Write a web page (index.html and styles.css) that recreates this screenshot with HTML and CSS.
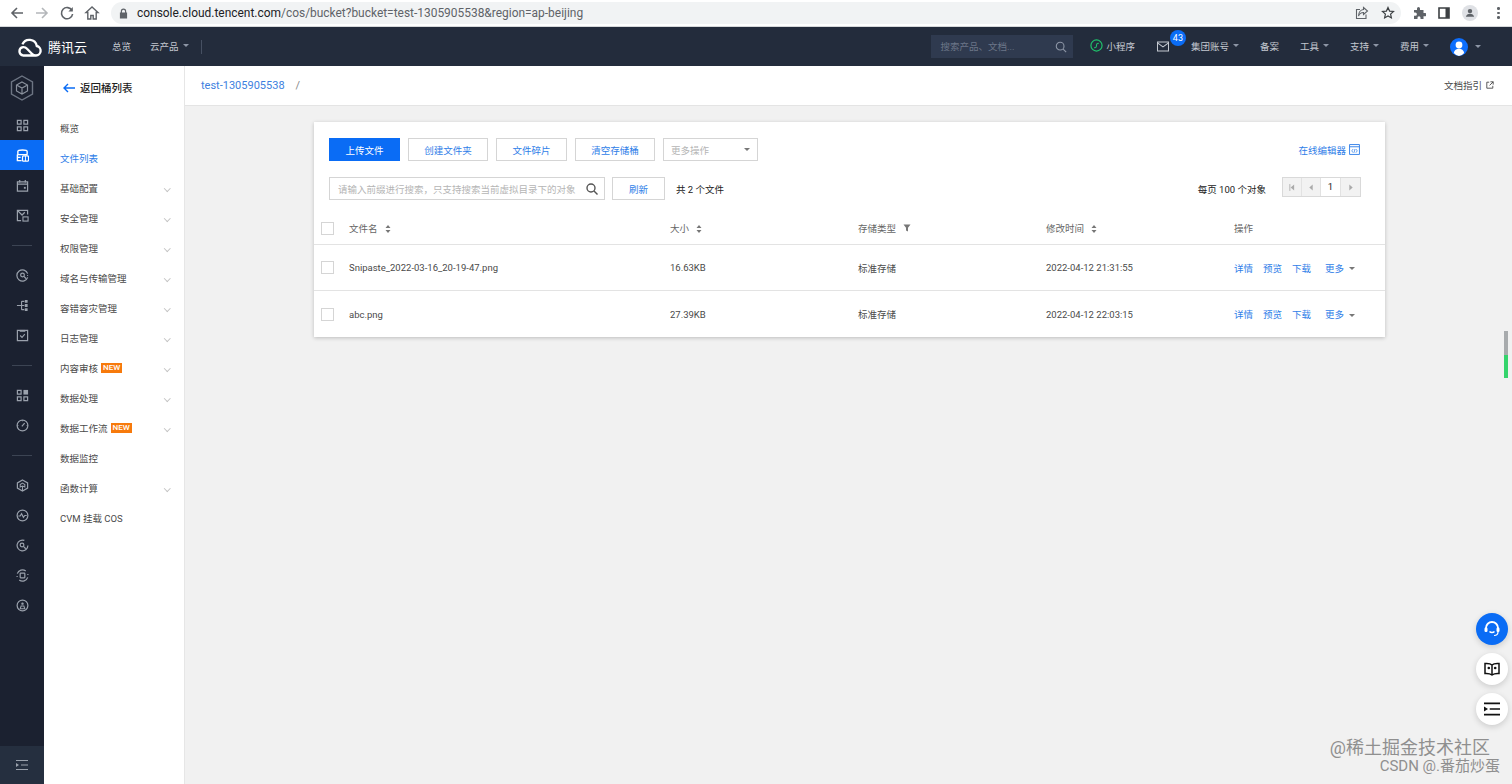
FILE: index.html
```html
<!DOCTYPE html>
<html lang="en">
<head>
    <meta charset="UTF-8">
    <title>对象存储 - 文件列表</title>
    <link rel="stylesheet" href="styles.css">
</head>
<body>
    <!-- browser toolbar -->
    <div class="chrome">
        <div class="chrome-nav">
            <svg class="chrome-icon" viewBox="0 0 16 16"><path d="M14 8H3M8 3L3 8l5 5" fill="none" stroke="#5f6368" stroke-width="1.6"/></svg>
            <svg class="chrome-icon" viewBox="0 0 16 16"><path d="M2 8h11M8 3l5 5-5 5" fill="none" stroke="#b4b7ba" stroke-width="1.6"/></svg>
            <svg class="chrome-icon" viewBox="0 0 16 16"><path d="M13 5.5A5.6 5.6 0 1 0 13.6 9" fill="none" stroke="#5f6368" stroke-width="1.6"/><path d="M13.8 2v4.4H9.4z" fill="#5f6368"/></svg>
            <svg class="chrome-icon" viewBox="0 0 16 16"><path d="M8 2L2 7.5h1.8V14h3v-3.5h2.4V14h3V7.5H14z" fill="none" stroke="#5f6368" stroke-width="1.4"/></svg>
        </div>
        <div class="url-pill">
            <svg class="url-lock" viewBox="0 0 10 12"><path d="M2 5V3.5a3 3 0 0 1 6 0V5h1v6.500H1V5zm1.300 0h3.400V3.500a1.700 1.700 0 0 0-3.400 0z" fill="#5f6368"/></svg>
            <span class="url-text"><b>console.cloud.tencent.com</b>/cos/bucket?bucket=test-1305905538&amp;region=ap-beijing</span>
            <svg class="url-act first" viewBox="0 0 14 14"><path d="M11 8.500V12.500H1.500V3.500H5M8.500 1.500L12.500 5 8.500 8.500V6.500C6 6.500 4.500 7.500 3.500 10 3.500 6.500 5.500 3.700 8.500 3.500z" fill="none" stroke="#5f6368" stroke-width="1.100"/></svg>
            <svg class="url-act" viewBox="0 0 14 14"><path d="M7 1.500l1.600 3.600 3.900.4-2.900 2.600.8 3.800L7 10l-3.400 1.900.8-3.800L1.500 5.500l3.900-.4z" fill="none" stroke="#3c4043" stroke-width="1.200"/></svg>
        </div>
        <div class="chrome-right">
            <svg class="ext-icon" viewBox="0 0 14 14"><path d="M5 2.500a1.500 1.500 0 0 1 3 0V4h3.500v3H13a1.600 1.600 0 0 1 0 3.200h-1.500V13H8.500v-1.300a1.500 1.500 0 0 0-3 0V13H2V9.800h1.300a1.600 1.600 0 0 0 0-3.200H2V4h3z" fill="#5f6368"/></svg>
            <svg class="ext-icon" viewBox="0 0 14 14"><path d="M2 2h10v10H2z" fill="none" stroke="#3c4043" stroke-width="1.600"/><path d="M8.500 2H12v10H8.500z" fill="#3c4043"/></svg>
            <span class="profile"><svg viewBox="0 0 14 14"><circle cx="7" cy="4.800" r="2.600" fill="#5f6368"/><path d="M2.200 11.500c.5-2.400 2.400-3.500 4.800-3.500s4.300 1.100 4.800 3.500z" fill="#5f6368"/></svg></span>
            <span class="kebab"><i></i><i></i><i></i></span>
        </div>
    </div>

    <!-- console header -->
    <header class="topnav">
        <svg class="logo" viewBox="0 0 28 20"><path d="M8 18.500h13a4.800 4.800 0 0 0 .8-9.500A7.600 7.600 0 0 0 7.400 7.400M21 18.500c-2 0-3.200-.8-4.600-2.200L12 11.800A4.900 4.900 0 0 0 8 10.200a4.200 4.200 0 0 0 0 8.300" fill="none" stroke="#fff" stroke-width="2.300"/></svg>
        <span class="brand">腾讯云</span>
        <a class="nav-link overview">总览</a>
        <a class="nav-link products">云产品<i class="caret"></i></a>
        <span class="nav-sep"></span>
        <div class="nav-right">
            <div class="nav-search">
                <span>搜索产品、文档...</span>
                <svg viewBox="0 0 14 14"><circle cx="6" cy="6" r="4.500" fill="none" stroke="#8d96a6" stroke-width="1.300"/><path d="M9.500 9.500L13 13" stroke="#8d96a6" stroke-width="1.300"/></svg>
            </div>
            <a class="nav-link mini">
                <svg viewBox="0 0 14 14"><circle cx="7" cy="7" r="6" fill="none" stroke="#1fc16b" stroke-width="1.300"/><path d="M4.500 9.200c1.500.6 2.500-.3 2.500-2.200s1-2.800 2.500-2.200" fill="none" stroke="#1fc16b" stroke-width="1.200"/></svg>
                小程序
            </a>
            <a class="nav-mail">
                <svg viewBox="0 0 14 12"><path d="M1 1h12v10H1zM1 2l6 4.500L13 2" fill="none" stroke="#c3c8d0" stroke-width="1.100"/></svg>
                <span class="badge">43</span>
            </a>
            <a class="nav-link">集团账号<i class="caret"></i></a>
            <a class="nav-link">备案</a>
            <a class="nav-link">工具<i class="caret"></i></a>
            <a class="nav-link">支持<i class="caret"></i></a>
            <a class="nav-link">费用<i class="caret"></i></a>
            <a class="nav-link avatar-link">
                <svg class="avatar" viewBox="0 0 18 18"><circle cx="9" cy="9" r="9" fill="#0d6efd"/><circle cx="9" cy="7" r="3.400" fill="#fff"/><path d="M3.800 15c.6-3 2.600-4.300 5.200-4.300s4.600 1.300 5.200 4.300A8.500 8.500 0 0 1 9 18a8.500 8.500 0 0 1-5.200-3z" fill="#fff"/></svg>
                <i class="caret avatar-caret"></i>
            </a>
        </div>
    </header>

    <div class="main">
        <!-- icon rail -->
        <nav class="rail">
            <div class="rail-logo">
                <svg viewBox="0 0 24 26"><path d="M12 1l10.500 6v12L12 25 1.500 19V7z" fill="none" stroke="#6d7583" stroke-width="1.400"/><path d="M12 7l5.500 3v6L12 19l-5.500-3v-6zM6.500 10l5.500 3 5.500-3M12 13v6" fill="none" stroke="#8a919d" stroke-width="1.200"/></svg>
            </div>
            <div class="rail-item"><svg viewBox="0 0 14 14"><path d="M1.500 1.500h4v4h-4zM8.500 1.500h4v4h-4zM1.500 8.500h4v4h-4zM8.500 8.500h4v4h-4z" fill="none" stroke="#9aa1ac" stroke-width="1.300"/></svg></div>
            <div class="rail-item active"><svg viewBox="0 0 14 14"><path d="M2 6V2.500C2 1.500 3 1 7 1s5 .5 5 1.500V6M1.500 6h11M1.500 6v6.500H6M2 9h3" fill="none" stroke="#fff" stroke-width="1.500"/><rect x="7" y="7.500" width="6.500" height="5.500" rx="1" fill="none" stroke="#fff" stroke-width="1.300"/><path d="M10.200 7.500v5.500" stroke="#fff"/></svg></div>
            <div class="rail-item"><svg viewBox="0 0 14 14"><path d="M1.500 3h11v10h-11zM4 1v3M10 1v3M1.500 5.500h11" fill="none" stroke="#9aa1ac" stroke-width="1.300"/><path d="M8.500 8.500h2v2h-2z" fill="#9aa1ac"/></svg></div>
            <div class="rail-item"><svg viewBox="0 0 14 14"><path d="M12.500 6V1.500h-11v11h4M1.500 1.500l5 5 3-3" fill="none" stroke="#9aa1ac" stroke-width="1.300"/><rect x="7.500" y="8.500" width="5.500" height="4.500" fill="none" stroke="#9aa1ac" stroke-width="1.200"/></svg></div>
            <div class="rail-sep"></div>
            <div class="rail-item"><svg viewBox="0 0 14 14"><path d="M12.600 9A6 6 0 1 1 12.600 5M13 7h-1" fill="none" stroke="#9aa1ac" stroke-width="1.300"/><circle cx="7" cy="6.500" r="2" fill="none" stroke="#9aa1ac" stroke-width="1.300"/><path d="M8.500 8l2.500 2.500" stroke="#9aa1ac" stroke-width="1.300"/></svg></div>
            <div class="rail-item"><svg viewBox="0 0 14 14"><path d="M1 7h5M6 2.500v9M6 2.500h3M6 7h3M6 11.500h3" fill="none" stroke="#9aa1ac" stroke-width="1.200"/><path d="M9.500 1h3v3h-3zM9.500 5.500h3v3h-3zM9.500 10h3v3h-3z" fill="#9aa1ac"/></svg></div>
            <div class="rail-item"><svg viewBox="0 0 14 14"><path d="M1.500 1.500h11v11h-11z" fill="none" stroke="#9aa1ac" stroke-width="1.300"/><path d="M4 1h6v2H4z" fill="#9aa1ac"/><path d="M4.500 7l2 2 3-3.500" fill="none" stroke="#9aa1ac" stroke-width="1.200"/></svg></div>
            <div class="rail-sep"></div>
            <div class="rail-item"><svg viewBox="0 0 14 14"><path d="M1.500 1.500h4v4h-4zM1.500 8.500h4v4h-4zM8.500 8.500h4v4h-4z" fill="none" stroke="#9aa1ac" stroke-width="1.300"/><path d="M8 1h5v5H8z" fill="#9aa1ac"/></svg></div>
            <div class="rail-item"><svg viewBox="0 0 14 14"><circle cx="7" cy="7" r="5.800" fill="none" stroke="#9aa1ac" stroke-width="1.300"/><path d="M6.300 8l3-3.500M1.500 7h1M11.500 7h1M7 1.500v1" fill="none" stroke="#9aa1ac" stroke-width="1.300"/></svg></div>
            <div class="rail-sep"></div>
            <div class="rail-item"><svg viewBox="0 0 14 14"><path d="M7 1l5.500 3.200v5.600L7 13l-5.500-3.200V4.200z" fill="none" stroke="#9aa1ac" stroke-width="1.300"/><path d="M7 4.500l2.500 1.500v2.500L7 7.500 4.500 8.500V6zM7 7.500V13" fill="none" stroke="#9aa1ac" stroke-width="1.100"/></svg></div>
            <div class="rail-item"><svg viewBox="0 0 14 14"><circle cx="7" cy="7" r="5.800" fill="none" stroke="#9aa1ac" stroke-width="1.300"/><path d="M2.500 7.500h2l1.500-2.500 2 4 1.500-2h2" fill="none" stroke="#9aa1ac" stroke-width="1.200"/></svg></div>
            <div class="rail-item"><svg viewBox="0 0 14 14"><path d="M12.800 7A5.800 5.800 0 1 1 9 1.500" fill="none" stroke="#9aa1ac" stroke-width="1.300"/><circle cx="6.500" cy="6.500" r="2" fill="none" stroke="#9aa1ac" stroke-width="1.300"/><path d="M8 8l2.500 2.500" stroke="#9aa1ac" stroke-width="1.300"/></svg></div>
            <div class="rail-item"><svg viewBox="0 0 14 14"><path d="M1.400 5A5.800 5.800 0 0 1 10.500 2.200M12.600 9A5.800 5.800 0 0 1 3.500 11.800M1.200 7.500v1M12.800 5.500v1" fill="none" stroke="#9aa1ac" stroke-width="1.300"/><rect x="4.500" y="4.500" width="5" height="5" rx=".5" fill="none" stroke="#9aa1ac" stroke-width="1.300"/></svg></div>
            <div class="rail-item"><svg viewBox="0 0 14 14"><circle cx="7" cy="7" r="5.800" fill="none" stroke="#9aa1ac" stroke-width="1.300"/><circle cx="7" cy="5" r="1.300" fill="#9aa1ac"/><path d="M4.500 10.500L5.500 7.500h3l1 3z" fill="none" stroke="#9aa1ac" stroke-width="1.100"/></svg></div>
            <div class="rail-foot"><svg viewBox="0 0 12 10"><path d="M0 .5h12M5 5h7M0 9.500h12" stroke="#9aa1ac"/><path d="M0 3l3 2-3 2z" fill="#9aa1ac"/></svg></div>
        </nav>

        <!-- bucket menu -->
        <aside class="side-menu">
            <div class="back-row">
                <svg viewBox="0 0 12 10"><path d="M12 5H1M5 1L1 5l4 4" fill="none" stroke="#0a6cf5" stroke-width="1.400"/></svg>
                返回桶列表
            </div>
            <ul class="menu-list">
                <li class="menu-row">概览</li>
                <li class="menu-row current">文件列表</li>
                <li class="menu-row arrow">基础配置</li>
                <li class="menu-row arrow">安全管理</li>
                <li class="menu-row arrow">权限管理</li>
                <li class="menu-row arrow">域名与传输管理</li>
                <li class="menu-row arrow">容错容灾管理</li>
                <li class="menu-row arrow">日志管理</li>
                <li class="menu-row arrow">内容审核<span class="new-tag">NEW</span></li>
                <li class="menu-row arrow">数据处理</li>
                <li class="menu-row arrow">数据工作流<span class="new-tag">NEW</span></li>
                <li class="menu-row">数据监控</li>
                <li class="menu-row arrow">函数计算</li>
                <li class="menu-row">CVM 挂载 COS</li>
            </ul>
        </aside>

        <main class="content">
            <div class="crumb-bar">
                <a class="crumb-link">test-1305905538</a>
                <span class="crumb-slash">/</span>
                <a class="doc-guide">文档指引
                    <svg viewBox="0 0 10 10"><path d="M4 1.500H1v7.500h7.500V6M5.500 1h3.500v3.500M9 1L4.500 5.500" fill="none" stroke="#444" stroke-width="1.100"/></svg>
                </a>
            </div>

            <section class="card">
                <div class="toolbar">
                    <button class="btn primary w71">上传文件</button>
                    <button class="btn w80">创建文件夹</button>
                    <button class="btn w71">文件碎片</button>
                    <button class="btn w80">清空存储桶</button>
                    <div class="select-box">更多操作<i class="caret"></i></div>
                    <a class="editor-link">在线编辑器
                        <svg viewBox="0 0 12 12"><path d="M.6.6h10.800v10.800H.6zM.6 3h10.800" fill="none" stroke="#2f7ee8"/><path d="M4.500 5.500L3 7.500l1.500 2M7.500 5.500l1.500 2-1.500 2M6.500 5.500l-1 4" fill="none" stroke="#2f7ee8" stroke-width=".8"/></svg>
                    </a>
                </div>
                <div class="toolbar second">
                    <div class="search-box">
                        <span>请输入前缀进行搜索，只支持搜索当前虚拟目录下的对象</span>
                        <svg viewBox="0 0 12 12"><circle cx="5" cy="5" r="4" fill="none" stroke="#555" stroke-width="1.400"/><path d="M8 8l3.500 3.500" stroke="#555" stroke-width="1.400"/></svg>
                    </div>
                    <button class="btn refresh">刷新</button>
                    <span class="total">共 2 个文件</span>
                    <span class="per-page">每页 100 个对象</span>
                    <div class="pager">
                        <span class="page-btn"><svg viewBox="0 0 7 8"><path d="M1 0v8" stroke="#aaa"/><path d="M6 .5v7L2 4z" fill="#aaa"/></svg></span>
                        <span class="page-btn"><svg viewBox="0 0 7 8"><path d="M5.500 .5v7L1.500 4z" fill="#aaa"/></svg></span>
                        <span class="page-num">1</span>
                        <span class="page-btn"><svg viewBox="0 0 7 8"><path d="M1.500 .5v7l4-3.500z" fill="#aaa"/></svg></span>
                    </div>
                </div>

                <div class="file-grid head">
                    <span class="check"></span>
                    <span>文件名<svg class="sort" viewBox="0 0 6 8"><path d="M3 0l2.500 3h-5zM3 8L.5 5h5z" fill="#777"/></svg></span>
                    <span>大小<svg class="sort" viewBox="0 0 6 8"><path d="M3 0l2.500 3h-5zM3 8L.5 5h5z" fill="#777"/></svg></span>
                    <span>存储类型<svg class="filter" viewBox="0 0 8 8"><path d="M.5 .5h7L5 3.800V7.500L3 6.500V3.800z" fill="#777"/></svg></span>
                    <span>修改时间<svg class="sort" viewBox="0 0 6 8"><path d="M3 0l2.500 3h-5zM3 8L.5 5h5z" fill="#777"/></svg></span>
                    <span>操作</span>
                </div>
                <div class="file-grid row">
                    <span class="check"></span>
                    <span>Snipaste_2022-03-16_20-19-47.png</span>
                    <span>16.63KB</span>
                    <span>标准存储</span>
                    <span>2022-04-12 21:31:55</span>
                    <span class="ops"><a>详情</a><a>预览</a><a>下载</a><a class="more">更多<i class="caret"></i></a></span>
                </div>
                <div class="file-grid row last">
                    <span class="check"></span>
                    <span>abc.png</span>
                    <span>27.39KB</span>
                    <span>标准存储</span>
                    <span>2022-04-12 22:03:15</span>
                    <span class="ops"><a>详情</a><a>预览</a><a>下载</a><a class="more">更多<i class="caret"></i></a></span>
                </div>
            </section>
        </main>
    </div>

    <div class="scroll-mark"><i></i></div>

    <div class="float-btns">
        <span class="float-btn blue"><svg viewBox="0 0 18 18"><path d="M3 9.500V8a6 6 0 0 1 12 0v1.500" fill="none" stroke="#fff" stroke-width="1.800"/><rect x="1.500" y="7.500" width="3" height="4.500" rx="1.200" fill="#fff"/><rect x="13.500" y="7.500" width="3" height="4.500" rx="1.200" fill="#fff"/><path d="M6.500 11.500c1.300 1.400 3.700 1.400 5 0" fill="none" stroke="#fff" stroke-width="1.400"/><path d="M15 12c0 2.500-2 3.500-4 3.500" fill="none" stroke="#fff" stroke-width="1.200"/></svg></span>
        <span class="float-btn"><svg viewBox="0 0 16 14"><path d="M8 3C6.500 1.500 3.500 1.300 1 1.500v10c2.500-.2 5 0 7 1.500 2-1.500 4.500-1.700 7-1.500v-10C12.500 1.300 9.500 1.500 8 3zM8 3v10" fill="none" stroke="#111" stroke-width="1.500"/><circle cx="4.800" cy="6" r="1.300" fill="#111"/><circle cx="11.200" cy="6" r="1.300" fill="#111"/></svg></span>
        <span class="float-btn"><svg viewBox="0 0 14 12"><path d="M0 1h14M5 6h9M0 11h14" stroke="#111" stroke-width="1.500"/><path d="M0 3.800L3.500 6 0 8.200z" fill="#111"/></svg></span>
    </div>

    <div class="watermark">
        <div class="wm-one">@稀土掘金技术社区</div>
        <div class="wm-two">CSDN @.番茄炒蛋</div>
    </div>
</body>
</html>
```

FILE: styles.css
```css
* {
    box-sizing: border-box;
}

html, body {
    margin: 0;
    height: 784px;
    overflow: hidden;
}

body {
    font-family: Roboto, "Noto Sans CJK SC", sans-serif;
    font-size: 9.5px;
    color: #4a4a4a;
    background-color: #f1f1f1;
}

a {
    color: inherit;
    text-decoration: none;
}

ul {
    list-style: none;
    margin: 0;
    padding: 0;
}

button {
    font-family: inherit;
    font-size: inherit;
}

.caret {
    display: inline-block;
    width: 0;
    height: 0;
    margin-left: 4px;
    border-left: 3px solid transparent;
    border-right: 3px solid transparent;
    border-top: 3.5px solid #8d96a6;
    vertical-align: middle;
}

/* browser toolbar */
.chrome {
    display: flex;
    align-items: center;
    height: 27px;
    background-color: #fff;
    border-bottom: 1px solid #d6d8da;
}

.chrome-nav {
    display: flex;
    align-items: center;
    gap: 9px;
    width: 111px;
    padding-left: 9px;
}

.chrome-icon {
    width: 16px;
    height: 16px;
}

.url-pill {
    display: flex;
    align-items: center;
    width: 1290px;
    height: 22px;
    padding: 0 6px 0 8px;
    background-color: #f1f3f4;
    border-radius: 11px;
}

.url-lock {
    width: 9px;
    height: 11px;
}

.url-text {
    margin-left: 9px;
    font-size: 11.95px;
    color: #5f6368;
}

.url-text b {
    font-weight: 400;
    color: #202124;
}

.url-act {
    width: 14px;
    height: 14px;
    margin-left: 12px;
}

.url-act.first {
    margin-left: auto;
}

.chrome-right {
    display: flex;
    align-items: center;
    gap: 11px;
    padding-left: 11px;
}

.ext-icon {
    width: 14px;
    height: 14px;
}

.profile {
    display: flex;
    align-items: center;
    justify-content: center;
    width: 16px;
    height: 16px;
    background-color: #dfe1e5;
    border-radius: 50%;
}

.profile svg {
    width: 12px;
    height: 12px;
}

.kebab {
    display: flex;
    flex-direction: column;
    gap: 2px;
    margin-left: 8px;
}

.kebab i {
    width: 2.500px;
    height: 2.500px;
    background-color: #5f6368;
    border-radius: 50%;
}

/* console header */
.topnav {
    display: flex;
    align-items: center;
    height: 39px;
    padding-left: 15px;
    color: #c3c8d0;
    background-color: #232c3c;
}

.logo {
    width: 28px;
    height: 20px;
}

.brand {
    margin-left: 5px;
    padding-bottom: 1px;
    font-size: 13px;
    color: #fff;
}

.nav-link {
    display: flex;
    align-items: center;
    padding-bottom: 2px;
    white-space: nowrap;
}

.overview {
    margin-left: 25px;
}

.products {
    margin-left: 19px;
}

.nav-sep {
    width: 1px;
    height: 14px;
    margin-left: 12px;
    background-color: #465062;
}

.nav-right {
    display: flex;
    align-items: center;
    gap: 21px;
    margin-left: auto;
    padding-right: 31px;
}

.nav-search {
    display: flex;
    align-items: center;
    justify-content: space-between;
    width: 142px;
    height: 23px;
    margin-right: -4px;
    padding: 0 6px 2px 9px;
    color: #6c7688;
    background-color: #2f3a4f;
}

.nav-search svg {
    width: 12px;
    height: 12px;
    margin-top: 2px;
}

.mini svg {
    width: 13px;
    height: 13px;
    margin-right: 3px;
}

.nav-mail {
    position: relative;
    display: flex;
    width: 14px;
}

.nav-mail svg {
    width: 14px;
    height: 11px;
}

.badge {
    position: absolute;
    top: -11px;
    left: 14px;
    width: 16px;
    height: 16px;
    font-size: 9px;
    line-height: 16px;
    text-align: center;
    color: #fff;
    background-color: #0a6cf5;
    border-radius: 50%;
}

.avatar-link {
    padding-bottom: 0;
}

.avatar {
    width: 18px;
    height: 18px;
}

.avatar-caret {
    margin-left: 7px;
}

/* page body */
.main {
    display: flex;
    height: 718px;
}

.rail {
    display: flex;
    flex-direction: column;
    flex: 0 0 44px;
    background-color: #1b2130;
}

.rail-logo {
    display: flex;
    align-items: center;
    justify-content: center;
    height: 44px;
}

.rail-logo svg {
    width: 24px;
    height: 26px;
}

.rail-item {
    display: flex;
    align-items: center;
    justify-content: center;
    height: 30px;
}

.rail-item svg {
    width: 13px;
    height: 13px;
}

.rail-item.active {
    background-color: #0a6cf5;
}

.rail-sep {
    position: relative;
    height: 30px;
}

.rail-sep::after {
    content: '';
    position: absolute;
    top: 15px;
    left: 12px;
    width: 20px;
    height: 1px;
    background-color: #3c4453;
}

.rail-foot {
    display: flex;
    align-items: center;
    justify-content: center;
    height: 38px;
    margin-top: auto;
    background-color: #252f3f;
}

.rail-foot svg {
    width: 12px;
    height: 10px;
}

.side-menu {
    flex: 0 0 141px;
    background-color: #fff;
    border-right: 1px solid #e6e6e6;
}

.back-row {
    display: flex;
    align-items: center;
    gap: 5px;
    height: 43px;
    padding-left: 19px;
    font-size: 10.500px;
    font-weight: 500;
    color: #222;
}

.back-row svg {
    width: 12px;
    height: 10px;
}

.menu-list {
    padding-top: 4px;
}

.menu-row {
    position: relative;
    display: flex;
    align-items: center;
    height: 30px;
    padding-left: 16px;
}

.menu-row.current {
    color: #2f7ee8;
}

.menu-row.arrow::after {
    content: '';
    position: absolute;
    top: 13px;
    right: 15px;
    width: 3.500px;
    height: 3.500px;
    border-right: 1px solid #c4c4c4;
    border-bottom: 1px solid #c4c4c4;
    transform: rotate(45deg);
}

.new-tag {
    height: 10px;
    margin-left: 3px;
    padding: 0 2px;
    font-size: 8px;
    font-weight: 500;
    line-height: 10px;
    color: #fff;
    background-color: #f77a0c;
}

/* content area */
.content {
    flex: 1;
}

.crumb-bar {
    display: flex;
    align-items: center;
    height: 40px;
    padding: 0 18px 0 16px;
    background-color: #fff;
    border-bottom: 1px solid #e4e4e4;
}

.crumb-link {
    font-size: 11px;
    color: #3d7fe0;
}

.crumb-slash {
    margin-left: 11px;
    font-size: 11px;
    color: #888;
}

.doc-guide {
    display: flex;
    align-items: center;
    gap: 4px;
    margin-left: auto;
    padding-bottom: 2px;
}

.doc-guide svg {
    width: 8px;
    height: 8px;
}

.card {
    display: flow-root;
    width: 1071px;
    height: 215px;
    margin: 16px 0 0 129px;
    background-color: #fff;
    box-shadow: 0 1px 4px rgba(0, 0, 0, .22);
}

.toolbar {
    display: flex;
    align-items: center;
    gap: 8px;
    height: 23px;
    margin: 16px 25px 0 15px;
}

.toolbar.second {
    gap: 0;
    margin-right: 24px;
}

.btn {
    height: 23px;
    padding: 0;
    color: #2f7ee8;
    background-color: #fff;
    border: 1px solid #d5d5d5;
}

.btn.primary {
    color: #fff;
    background-color: #0a6cf5;
    border-color: #0a6cf5;
}

.w71 {
    width: 71px;
}

.w80 {
    width: 80px;
}

.select-box {
    display: flex;
    align-items: center;
    justify-content: space-between;
    width: 95px;
    height: 23px;
    padding: 0 7px;
    color: #b5b5b5;
    border: 1px solid #d5d5d5;
}

.select-box .caret {
    border-top-color: #777;
}

.editor-link {
    display: flex;
    align-items: center;
    gap: 3px;
    margin-left: auto;
    color: #2f7ee8;
}

.editor-link svg {
    width: 11px;
    height: 11px;
}

.search-box {
    display: flex;
    align-items: center;
    justify-content: space-between;
    width: 276px;
    height: 23px;
    padding: 0 6px 0 8px;
    color: #b5b5b5;
    border: 1px solid #d5d5d5;
}

.search-box svg {
    width: 12px;
    height: 12px;
}

.refresh {
    width: 53px;
    margin-left: 7px;
}

.total {
    margin-left: 11px;
    color: #222;
}

.per-page {
    margin-left: auto;
    color: #222;
}

.pager {
    display: flex;
    align-self: flex-start;
    height: 20px;
    margin-left: 16px;
    border: 1px solid #d9d9d9;
}

.page-btn {
    display: flex;
    align-items: center;
    justify-content: center;
    width: 19px;
    background-color: #f2f2f2;
    border-right: 1px solid #e2e2e2;
}

.page-btn:last-child {
    border-right: 0;
}

.page-btn svg {
    width: 6px;
    height: 7px;
}

.page-num {
    width: 20px;
    line-height: 18px;
    text-align: center;
    color: #222;
    border-right: 1px solid #e2e2e2;
}

/* file table */
.file-grid {
    display: grid;
    grid-template-columns: 35px 321px 188px 188px 188px 1fr;
    align-items: center;
    border-bottom: 1px solid #e3e3e3;
}

.file-grid.head {
    height: 33px;
    margin-top: 12px;
    color: #666;
}

.file-grid.row {
    height: 46px;
}

.file-grid.row.last {
    border-bottom: 0;
}

.check {
    width: 13px;
    height: 13px;
    margin-left: 7px;
    border: 1px solid #d5d5d5;
}

.sort {
    width: 6px;
    height: 8px;
    margin-left: 7px;
    vertical-align: -1px;
}

.filter {
    width: 8px;
    height: 8px;
    margin-left: 7px;
}

.ops {
    display: flex;
    gap: 10px;
    color: #2f7ee8;
}

.more {
    margin-left: 4px;
}

.more .caret {
    margin-left: 5px;
    border-top-color: #777;
}

/* floating helpers */
.scroll-mark {
    position: absolute;
    top: 331px;
    left: 1504px;
    width: 4px;
    height: 47px;
    background-color: #a8abad;
}

.scroll-mark i {
    display: block;
    height: 23px;
    margin-top: 24px;
    background-color: #35d46c;
}

.float-btns {
    position: absolute;
    top: 613px;
    left: 1476px;
    display: flex;
    flex-direction: column;
    gap: 8px;
}

.float-btn {
    display: flex;
    align-items: center;
    justify-content: center;
    width: 32px;
    height: 32px;
    background-color: #fff;
    border-radius: 50%;
    box-shadow: 0 2px 6px rgba(0, 0, 0, .16);
}

.float-btn.blue {
    background-color: #0a6cf5;
}

.float-btn svg {
    width: 16px;
    height: 14px;
}

.float-btn.blue svg {
    width: 18px;
    height: 18px;
}

.watermark {
    position: absolute;
    top: 739px;
    right: 12px;
    text-align: right;
    color: #8f8f8f;
    line-height: 1;
    white-space: nowrap;
}

.wm-one {
    margin-right: 10px;
    font-size: 18px;
}

.wm-two {
    margin-top: 2px;
    font-size: 15px;
}
```
